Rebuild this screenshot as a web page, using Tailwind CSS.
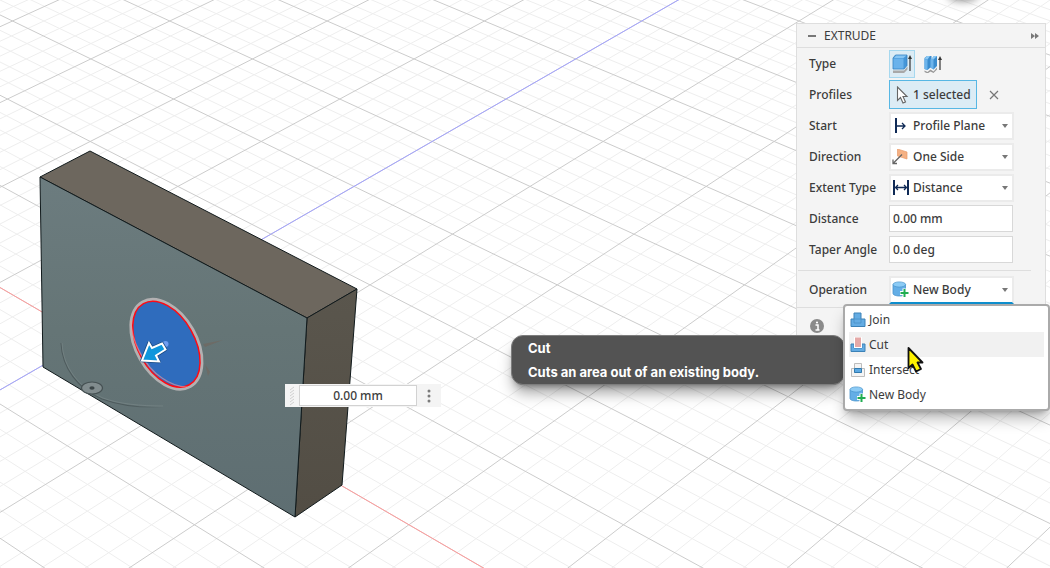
<!DOCTYPE html>
<html lang="en">
<head>
  <meta charset="UTF-8">
  <meta name="viewport" content="width=device-width, initial-scale=1.0">
  <title>Extrude</title>
  <script src="https://cdn.jsdelivr.net/npm/@tailwindcss/browser@4"></script>
</head>
<body class="relative min-h-screen overflow-hidden bg-white font-['Noto_Sans',sans-serif] text-xs text-[#3c3c3c]">

  <!-- Shared icons -->
  <svg class="hidden">
    <symbol id="icon-new-body" viewBox="0 0 17 17">
      <path d="M1 3.500v9c0 1.400 2.800 2.500 6.500 2.500s6-1.100 6-2.500v-9z" fill="#64aee6" stroke="#4793cc" stroke-width=".8"/>
      <ellipse cx="7.300" cy="3.500" rx="6.300" ry="2.600" fill="#8ccbf5" stroke="#4793cc" stroke-width=".7"/>
      <path d="M12.500 7.500v9M8 12h9" stroke="#fff" stroke-width="4"/>
      <path d="M12.500 8v8M8.500 12h8" stroke="#21ad52" stroke-width="2"/>
    </symbol>
  </svg>

  <!-- Viewport -->
  <svg class="absolute inset-0 h-full w-full" viewBox="0 0 1050 568" preserveAspectRatio="xMinYMin slice">
    <defs>
      <linearGradient id="front" x1="0" y1="0" x2="0" y2="1">
        <stop offset="0" stop-color="#6c7c7f"/>
        <stop offset=".45" stop-color="#657576"/>
        <stop offset="1" stop-color="#5e6e72"/>
      </linearGradient>
      <linearGradient id="side" x1="0" y1="0" x2="0" y2="1">
        <stop offset="0" stop-color="#5a564d"/>
        <stop offset="1" stop-color="#524d44"/>
      </linearGradient>
      <linearGradient id="arc" x1="0" y1="0" x2="1" y2="0">
        <stop offset="0" stop-color="#4e5b5d"/>
        <stop offset=".7" stop-color="#4e5b5d"/>
        <stop offset="1" stop-color="#4e5b5d" stop-opacity="0"/>
      </linearGradient>
      <filter id="soft" x="-50%" y="-100%" width="200%" height="300%"><feGaussianBlur stdDeviation="4"/></filter>
    </defs>
    <path id="minor" fill="none" stroke="#eeeeee"/>
    <path id="major" fill="none" stroke="#cccccc"/>
    <path id="axis-x" fill="none" stroke="#ff9c9c"/>
    <path id="axis-z" fill="none" stroke="#a3a3ff"/>
    <ellipse cx="963" cy="-5" rx="15" ry="6" fill="#888" filter="url(#soft)"/>

    <!-- Solid body -->
    <g stroke="#111a1c" stroke-linejoin="round">
      <path d="M40 177 90 151 357 289 307 318z" fill="#6d675e"/>
      <path d="M307 318 357 289 342 485 295 517z" fill="url(#side)"/>
      <path d="M40 177 307 318 295 517 43 367z" fill="url(#front)"/>
    </g>

    <!-- Selected profile -->
    <path d="M203 344l20-4-18 7zM205 364l5 8-2 4z" fill="#6d6b66"/>
    <g transform="translate(166.400 344.200) rotate(60.500)">
      <ellipse rx="48.300" ry="30" fill="#2f6cbd" stroke="#b3b1b2" stroke-width="3.500"/>
      <ellipse rx="46.600" ry="28.300" fill="none" stroke="#ff0a14" stroke-width="1.500"/>
    </g>
    <path d="M131 321c0 20 14 46 31 57 10 7 18 9 25 9" fill="none" stroke="#f59aa0" stroke-width="1.200" stroke-opacity=".6"/>

    <!-- Manipulators -->
    <path d="M61 343c1 25 17 46 41 56 16 6 38 9 62 8" fill="none" stroke="url(#arc)" stroke-width="1.100"/>
    <path d="M62 343c1 24 17 45 41 55 16 6 38 8 60 8" fill="none" stroke="#899496" stroke-width=".4"/>
    <ellipse cx="92" cy="388" rx="10.500" ry="6" fill="#818c8e" stroke="#465153" stroke-width="1.200"/>
    <ellipse cx="92" cy="388" rx="2.600" ry="1.700" fill="#3b4547"/>
    <circle cx="165.500" cy="344" r="3" fill="#709df0"/>
    <path d="M142 360.500 149 343 152 348 162 343.500 165.500 349.500 156 355.500 159 361.500z" fill="#0e96dc" stroke="#174a83" stroke-width="3.500" stroke-linejoin="round"/>
    <path d="M142 360.500 149 343 152 348 162 343.500 165.500 349.500 156 355.500 159 361.500z" fill="#0e96dc" stroke="#fff" stroke-width="2"/>
  </svg>

  <!-- Value input beside the manipulator -->
  <div class="absolute top-[384px] left-[285px] flex h-[23px] items-center bg-[#f4f4f4]">
    <svg class="mx-1 h-5 w-1.5" viewBox="0 0 6 20" stroke="#d0d0d0">
      <path d="M1 4l4-3M1 7l4-3M1 10l4-3M1 13l4-3M1 16l4-3M1 19l4-3"/>
    </svg>
    <input type="text" value="0.00 mm" aria-label="Distance value" class="h-[21px] w-[118px] border border-[#d2d2d2] bg-white text-center font-medium">
    <button type="button" aria-label="More options" class="flex h-full w-6 items-center justify-center">
      <svg class="h-4 w-1" viewBox="0 0 4 16" fill="#7b7b7b"><circle cx="2" cy="3" r="1.500"/><circle cx="2" cy="8" r="1.500"/><circle cx="2" cy="13" r="1.500"/></svg>
    </button>
  </div>

  <!-- Extrude panel -->
  <section class="absolute top-[23px] right-1 w-[250px] border border-[#dedede] bg-[#f4f4f4] font-medium">
    <header class="flex h-6 items-center border-b border-[#dedede] pr-1.5 pl-[11px]">
      <button type="button" aria-label="Collapse" class="h-0.5 w-2 bg-[#777]"></button>
      <h2 class="ml-2 flex-1 font-normal">EXTRUDE</h2>
      <button type="button" aria-label="Dock panel">
        <svg class="h-2 w-2" viewBox="0 0 8 8" fill="#777"><path d="M0 1l4 3-4 3zM4 1l4 3-4 3z"/></svg>
      </button>
    </header>

    <div class="pl-3">
      <div class="flex h-[31px] items-center">
        <span class="w-20">Type</span>
        <button type="button" aria-label="Extrude" aria-pressed="true" class="flex h-7 w-[26px] items-center justify-center border border-[#a6d8ef] bg-[#dcecf5]">
          <svg class="h-5 w-5" viewBox="0 0 20 20">
            <path d="M1 16.500h11l3.500-4v3l-3.500 3.500H1z" fill="#a8a8a8"/>
            <path d="M1 4 3.500 1H15v10.500l-3 3.500H1z" fill="#4596d8" stroke="#3681bf" stroke-width=".8"/>
            <path d="M1.500 4.500h10v10h-10z" fill="#6ab2eb"/><path d="M2 4 4 1.500h10.500l-3 2.500z" fill="#87c5f3"/>
            <path d="M18 3v14" stroke="#333" stroke-width="1.200"/><path d="M18 1l2 4h-4z" fill="#333"/>
          </svg>
        </button>
        <button type="button" aria-label="Thin extrude" class="ml-2 flex h-7 w-5 items-center justify-center">
          <svg class="h-[18px] w-[18px]" viewBox="0 0 18 18">
            <path d="M.500 15.500l3 1.500 3-2.500 3 2 3.500-4v2l-3.500 3.500-3-1.500-3 2-3-1.500z" fill="#999"/>
            <path d="M.500 3 3 1h4.500v3L10 1h3v10L9.500 14.500l-3-2-3 2.500-3-1z" fill="#3b8dcf"/>
            <path d="M.500 4l3 .5V15l-3-1zM6.500 4.500h3v10l-3-2z" fill="#6db4eb"/>
            <path d="M.500 3.500 3 1h3L3.500 4.500zM6.500 4.500 10 1h3L9.500 4.500z" fill="#8bc8f3"/>
            <path d="M16 3v12" stroke="#333" stroke-width="1.200"/><path d="M16 1l2 4h-4z" fill="#333"/>
          </svg>
        </button>
      </div>

      <div class="flex h-[31px] items-center">
        <span class="w-20">Profiles</span>
        <button type="button" class="flex h-[29px] w-[88px] items-center gap-1 border border-[#57b7e4] bg-[#dcecf5] pl-1.5">
          <svg class="h-[18px] w-[13px] shrink-0" viewBox="0 0 13 18"><path d="M1.500 1v13.500l3-3 2.500 5.500 2.500-1-2.500-5.500h4z" fill="#fff" stroke="#666" stroke-width="1.100"/></svg>
          <span class="whitespace-nowrap">1 selected</span>
        </button>
        <button type="button" aria-label="Clear selection" class="ml-3">
          <svg class="h-2.5 w-2.5" viewBox="0 0 10 10" stroke="#777" stroke-width="1.200"><path d="M1 1l8 8M9 1l-8 8"/></svg>
        </button>
      </div>

      <div class="flex h-[31px] items-center">
        <label for="start" class="w-20">Start</label>
        <div class="relative w-[125px]">
          <select id="start" class="h-7 w-full appearance-none border-2 border-[#ebebeb] bg-white pl-[22px]"><option>Profile Plane</option></select>
          <svg class="pointer-events-none absolute top-1.5 left-1.5 h-4 w-3" viewBox="0 0 12 16" stroke="#0f2a56" fill="none"><path d="M1 0v15" stroke-width="2"/><path d="M2 8h8M7 5l3 3-3 3" stroke-width="1.300"/></svg>
          <svg class="pointer-events-none absolute top-3 right-1.5 h-1 w-1.5" viewBox="0 0 6 4" fill="#777"><path d="M0 0h6L3 4z"/></svg>
        </div>
      </div>

      <div class="flex h-[31px] items-center">
        <label for="direction" class="w-20">Direction</label>
        <div class="relative w-[125px]">
          <select id="direction" class="h-7 w-full appearance-none border-2 border-[#ebebeb] bg-white pl-[22px]"><option>One Side</option></select>
          <svg class="pointer-events-none absolute top-1.5 left-[3px] h-4 w-4" viewBox="0 0 16 16"><path d="M5.500 0l9.500 3v7L5.500 7z" fill="#f5b184" stroke="#e89c6b" stroke-width=".7"/><path d="M10 5.500l-9 9M1 10.500v4h4" fill="none" stroke="#666" stroke-width="1.300"/></svg>
          <svg class="pointer-events-none absolute top-3 right-1.5 h-1 w-1.5" viewBox="0 0 6 4" fill="#777"><path d="M0 0h6L3 4z"/></svg>
        </div>
      </div>

      <div class="flex h-[31px] items-center">
        <label for="extent" class="w-20">Extent Type</label>
        <div class="relative w-[125px]">
          <select id="extent" class="h-7 w-full appearance-none border-2 border-[#ebebeb] bg-white pl-[22px]"><option>Distance</option></select>
          <svg class="pointer-events-none absolute top-1.5 left-1 h-4 w-4" viewBox="0 0 16 16" stroke="#0f2a56" fill="none"><path d="M1 0v15M15 0v15" stroke-width="2"/><path d="M3 7.500h10M5 5L2.500 7.500 5 10M11 5l2.500 2.500L11 10" stroke-width="1.300"/></svg>
          <svg class="pointer-events-none absolute top-3 right-1.5 h-1 w-1.5" viewBox="0 0 6 4" fill="#777"><path d="M0 0h6L3 4z"/></svg>
        </div>
      </div>

      <div class="flex h-[31px] items-center">
        <label for="distance" class="w-20">Distance</label>
        <input id="distance" type="text" value="0.00 mm" class="h-[27px] w-[124px] border border-[#d8d8d8] bg-white px-[3px]">
      </div>

      <div class="flex h-[31px] items-center">
        <label for="taper" class="w-20">Taper Angle</label>
        <input id="taper" type="text" value="0.0 deg" class="h-[27px] w-[124px] border border-[#d8d8d8] bg-white px-[3px]">
      </div>
    </div>

    <hr class="mt-[5px] mr-3.5 ml-px border-[#dedede]">

    <div class="flex items-center pt-[5px] pb-[3px] pl-3">
      <label for="operation" class="w-20">Operation</label>
      <div class="relative w-[125px]">
        <select id="operation" class="block h-7 w-full appearance-none border-2 border-x-[#ebebeb] border-t-[#ebebeb] border-b-[#0e8fce] bg-white pl-[22px]"><option>New Body</option></select>
        <svg class="pointer-events-none absolute top-[5px] left-[3px] h-[17px] w-[17px]"><use href="#icon-new-body"/></svg>
        <svg class="pointer-events-none absolute top-3 right-1.5 h-1 w-1.5" viewBox="0 0 6 4" fill="#777"><path d="M0 0h6L3 4z"/></svg>
      </div>
    </div>

    <footer class="flex h-9 items-center border-t border-[#dedede] pl-3">
      <button type="button" aria-label="Information">
        <svg class="h-4 w-4" viewBox="0 0 16 16"><circle cx="8" cy="8" r="7" fill="#8a8a8a"/><path d="M6.500 7H9v5M6.500 12h4" fill="none" stroke="#fff" stroke-width="1.500"/><circle cx="8" cy="4.500" r="1.100" fill="#fff"/></svg>
      </button>
    </footer>
  </section>

  <!-- Tooltip -->
  <div role="tooltip" class="absolute top-[335px] right-[205px] w-[334px] rounded-xl border border-[#7d7d7d] bg-[#535353] px-4 py-0.5 font-['Inter',sans-serif] text-[13px] leading-5 font-bold text-white shadow-lg shadow-black/40">
    <p>Cut</p>
    <p class="mt-1">Cuts an area out of an existing body.</p>
  </div>

  <!-- Operation menu -->
  <div role="listbox" aria-label="Operation" class="absolute top-[304px] right-0 w-[207px] rounded border-2 border-[#aaa] bg-white px-1 pt-px pb-0.5 shadow-lg shadow-black/30">
    <button type="button" role="option" class="flex h-[25px] w-full items-center gap-[3px] pl-px">
      <svg class="h-4 w-4" viewBox="0 0 16 16"><path d="M1 7h3V1h7v6h4v7.500H1z" fill="#64ace3" stroke="#3c82b7"/><path d="M4 7v4h7V7z" fill="none" stroke="#4a8fc5" stroke-width=".8"/></svg>
      Join
    </button>
    <button type="button" role="option" aria-selected="true" class="flex h-[25px] w-full items-center gap-[3px] bg-[#f1f1f1] pl-px">
      <svg class="h-4 w-4" viewBox="0 0 16 16"><path d="M1 7h3v4h8V7h3v7.500H1z" fill="#64ace3" stroke="#3c82b7"/><path d="M4 0h8v11H4z" fill="#fff"/><path d="M5 0.500h6V10H5z" fill="#e5a9a7"/></svg>
      Cut
    </button>
    <button type="button" role="option" class="flex h-[25px] w-full items-center gap-[3px] pl-px">
      <svg class="h-4 w-4" viewBox="0 0 16 16"><path d="M1.500 6.500h13v8h-13zM4.500 1.500h7v9h-7z" fill="#f4f4f4" stroke="#bdbdbd"/><path d="M4.500 6.500h7v4h-7z" fill="#5ba8e2" stroke="#317aae"/></svg>
      Intersect
    </button>
    <button type="button" role="option" class="flex h-[25px] w-full items-center gap-[3px]">
      <svg class="h-[17px] w-[17px]"><use href="#icon-new-body"/></svg>
      New Body
    </button>
  </div>

  <!-- Pointer -->
  <svg class="pointer-events-none absolute top-[345px] right-[125px] h-8 w-5" viewBox="0 0 20 32">
    <path d="M3.500 3v20l4-3.500 3.500 7 5-2.500-3.500-6.500h5z" fill="#fff200" stroke="#111" stroke-width="1.800" stroke-linejoin="round"/>
  </svg>

  <script>
    // Perspective floor grid: r is the depth of a point, c its sideways position
    function project(r, c) {
      const w = 1 - 0.02667 * r;
      const x = (641.7 - 2.72 * r + 78.65 * c) / w;
      const y = (21 + 36.38 * r) / w;
      return x.toFixed(1) + ' ' + y.toFixed(1);
    }

    function gridLine(slope, offset) {
      return 'M' + project(-3, -3 * slope + offset) + 'L' + project(16, 16 * slope + offset);
    }

    let minor = '';
    let major = '';
    for (let n = -100; n <= 100; n++) {
      const offset = n * 0.4;
      const lines = gridLine(1, offset) + gridLine(-1, offset);
      if (n % 5 === 0) major += lines;
      else minor += lines;
    }
    document.getElementById('minor').setAttribute('d', minor);
    document.getElementById('major').setAttribute('d', major);
    document.getElementById('axis-x').setAttribute('d', gridLine(1, -14));
    document.getElementById('axis-z').setAttribute('d', gridLine(-1, 0));
  </script>
</body>
</html>
